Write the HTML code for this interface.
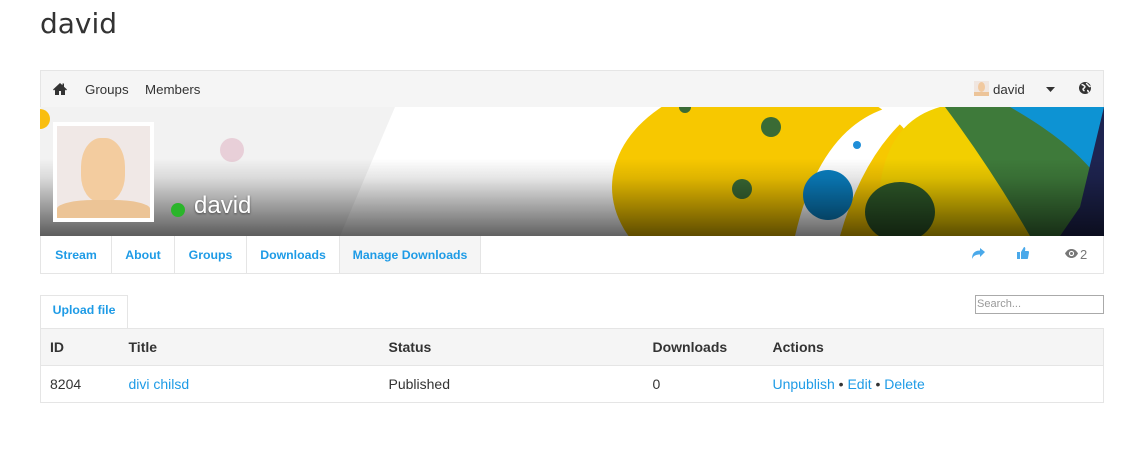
<!DOCTYPE html>
<html><head><meta charset="utf-8"><style>
*{box-sizing:border-box;margin:0;padding:0}
body{width:1126px;height:459px;background:#fff;font-family:"Liberation Sans",Helvetica,Arial,sans-serif;color:#333;position:relative;overflow:hidden}
.abs{position:absolute}
h1{position:absolute;left:40px;top:7px;font-family:"DejaVu Sans",sans-serif;font-weight:normal;font-size:28px;color:#333}
.nav{left:40px;top:70px;width:1064px;height:38px;background:#f5f5f5;border:1px solid #e5e5e5;font-size:13.3px;color:#333}
.nav span{position:absolute;top:11px}
.banner{left:40px;top:107px;width:1064px;height:129px;overflow:hidden;background:#fff}
.tabs{left:40px;top:236px;width:1064px;height:38px;border:1px solid #e5e5e5;border-top:none;font-size:12.3px;font-weight:bold;color:#1e9be6}
.tab{position:absolute;top:0;height:37px;line-height:39px;text-align:center;border-right:1px solid #e5e5e5}
.blue{color:#1e9be6}
table{position:absolute;left:40px;top:328px;width:1064px;border-collapse:collapse;border:1px solid #e5e5e5;font-size:14px;font-family:"Liberation Sans",Helvetica,Arial,sans-serif}
td,th{text-align:left;padding:0 0 0 9px;height:37px;border-top:1px solid #e5e5e5}
th{background:#f5f5f5;font-weight:bold}
</style></head><body>
<h1>david</h1>
<div class="abs nav">
 <svg class="abs" style="left:12px;top:11px" width="14" height="13" viewBox="0 0 14 13"><path d="M7 1L0 7.5l1 1L2 7.6V13h4V9h2v4h4V7.6l1 .9 1-1L11 4.7V1.5H9.5v1.8z" fill="#333"/></svg>
 <span style="left:44px">Groups</span>
 <span style="left:104px">Members</span>
 <div class="abs" style="left:933px;top:10px;width:15px;height:15px;background:#f0e6e0;overflow:hidden"><div style="position:absolute;left:4px;top:1px;width:7px;height:10px;border-radius:50%;background:#f1c99f"></div><div style="position:absolute;left:0;top:11px;width:15px;height:4px;background:#ecc499"></div></div>
 <span style="left:952px">david</span>
 <svg class="abs" style="left:1005px;top:16px" width="9" height="5"><path d="M0 0h9L4.5 5z" fill="#333"/></svg>
 <svg class="abs" style="left:1038px;top:11px" width="12" height="12" viewBox="0 0 12 12"><circle cx="6" cy="6" r="6" fill="#333"/><path d="M2.5 2.5c1.5 0 2 1 3 1.5s0 2 -1 2.5 0 2 1 2.5M7.5 1c0 1.5 1.5 1.5 2 2.5s1.5 1 2 1.5M8 8.5c1 0 1.5 1 1.5 2" stroke="#f5f5f5" stroke-width="1.5" fill="none"/></svg>
</div>
<div class="abs banner">
 <svg width="1064" height="129" style="position:absolute;left:0;top:0">
  <defs><linearGradient id="g" x1="0" y1="0" x2="0" y2="1"><stop offset="0.4" stop-color="#000" stop-opacity="0"/><stop offset="0.55" stop-color="#000" stop-opacity="0.1"/><stop offset="1" stop-color="#000" stop-opacity="0.62"/></linearGradient></defs>
  <polygon points="0,0 355,0 300,129 0,129" fill="#f2f2f2"/>
  <circle cx="0" cy="12" r="10" fill="#f9be0e"/>
  <circle cx="192" cy="43" r="12" fill="#e8cfd8"/>
  <ellipse cx="730" cy="80" rx="158" ry="110" fill="#f7c800"/>
  <circle cx="645" cy="0" r="6" fill="#3a6b35"/>
  <circle cx="731" cy="20" r="10" fill="#3a6b35"/>
  <circle cx="702" cy="82" r="10" fill="#3a6b35"/>
  <path d="M755 129 Q780 20 850 0 L880 0 Q825 40 800 129z" fill="#fff"/>
  <circle cx="817" cy="38" r="4" fill="#1f8ed8"/>
  <path d="M840 129 Q830 20 900 0 L1064 0 L1064 129z" fill="#f2cf00"/>
  <path d="M905 0 L1064 0 L1064 129 L990 129 Q950 60 905 0z" fill="#3e7a3a"/>
  <path d="M970 0 L1064 0 L1064 80 Q1040 40 970 0z" fill="#0d93d3"/>
  <path d="M1040 100 L1064 0 L1064 129 L1020 129z" fill="#1e2450"/>
  <circle cx="788" cy="88" r="25" fill="#0a7fc0"/>
  <ellipse cx="860" cy="105" rx="35" ry="30" fill="#2f5b2a"/>
  <rect width="1064" height="129" fill="url(#g)"/>
 </svg>
 <div class="abs" style="left:13px;top:15px;width:101px;height:100px;background:#fff;padding:4px">
  <div style="position:relative;width:93px;height:92px;background:#f0e8e6;overflow:hidden">
   <div style="position:absolute;left:24px;top:12px;width:44px;height:64px;border-radius:45% 45% 42% 42%;background:#f3cc9f"></div>
   <div style="position:absolute;left:0;top:74px;width:93px;height:22px;border-radius:40% 40% 0 0;background:#ecc496"></div>
  </div>
 </div>
 <div class="abs" style="left:131px;top:96px;width:14px;height:14px;border-radius:50%;background:#2ab52a"></div>
 <div class="abs" style="left:154px;top:85px;font-size:24px;color:#fff;text-shadow:0 1px 2px rgba(0,0,0,.5)">david</div>
</div>
<div class="abs tabs">
 <div class="tab" style="left:0;width:71px">Stream</div>
 <div class="tab" style="left:71px;width:63px">About</div>
 <div class="tab" style="left:134px;width:72px">Groups</div>
 <div class="tab" style="left:206px;width:93px">Downloads</div>
 <div class="tab" style="left:299px;width:141px;background:#f5f5f5">Manage Downloads</div>
 <svg class="abs" style="left:931px;top:12px" width="13" height="11" viewBox="0 0 13 11"><path d="M13 4L8 0v2.5C3 2.5 0 5 0 11c1.5-3.5 4-4.5 8-4.5V9z" fill="#4aa9ea"/></svg>
 <svg class="abs" style="left:976px;top:11px" width="12" height="12" viewBox="0 0 12 12"><rect x="0" y="5" width="3" height="7" fill="#4aa9ea"/><path d="M4 5l3-5c1.5 0 1.5 1.5 1 4h3c1 0 1 1 1 1.5L11 11c0 .8-.5 1-1 1H4z" fill="#4aa9ea"/></svg>
 <svg class="abs" style="left:1024px;top:13px" width="13" height="9" viewBox="0 0 13 9"><path d="M0 4.5C2 1 4 0 6.5 0S11 1 13 4.5C11 8 9 9 6.5 9S2 8 0 4.5z" fill="#777"/><circle cx="6.5" cy="4.5" r="2.6" fill="#fff"/><circle cx="6.5" cy="4.5" r="1.5" fill="#777"/></svg>
 <div class="abs" style="left:1039px;top:11px;font-size:13px;font-weight:normal;color:#777">2</div>
</div>
<div class="abs" style="left:40px;top:295px;width:88px;height:33px;border:1px solid #e5e5e5;border-bottom:none;font-size:12.3px;font-weight:bold;color:#1e9be6;text-align:center;line-height:28px">Upload file</div>
<div class="abs" style="left:975px;top:295px;width:129px;height:19px;border:1px solid #aaa;font-size:11px;color:#999;padding:2px 1px">Search...</div>
<table>
 <tr><th style="width:79px">ID</th><th style="width:260px">Title</th><th style="width:264px">Status</th><th style="width:120px">Downloads</th><th>Actions</th></tr>
 <tr><td>8204</td><td class="blue">divi chilsd</td><td>Published</td><td>0</td><td><span class="blue">Unpublish</span> • <span class="blue">Edit</span> • <span class="blue">Delete</span></td></tr>
</table>
</body></html>
